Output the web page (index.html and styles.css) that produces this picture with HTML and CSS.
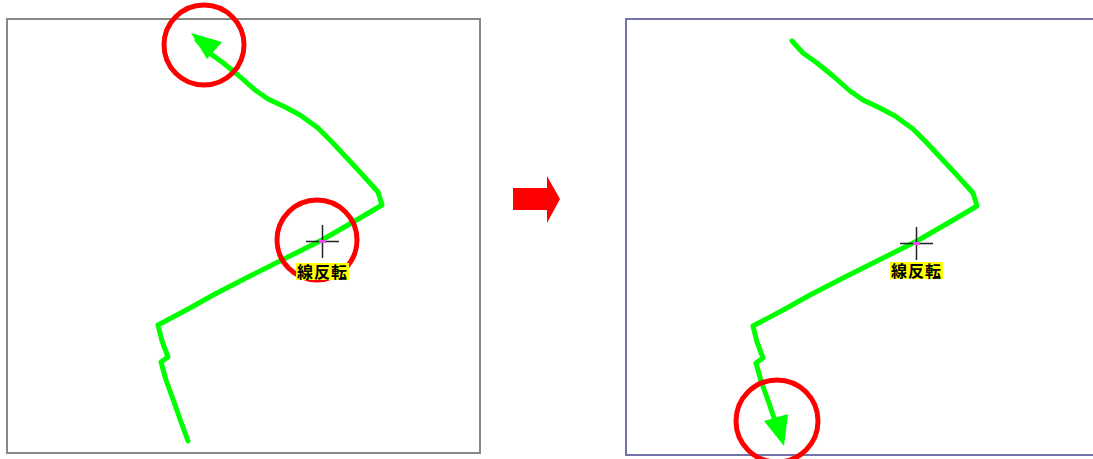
FILE: index.html
```html
<!DOCTYPE html>
<html lang="ja">
  <head>
    <meta charset="UTF-8" />
    <title>線反転</title>
    <link rel="stylesheet" href="styles.css">
  </head>
  <body>
    <div class="page">
      <!-- before -->
      <div class="panel panel-before">
        <svg class="canvas" width="471" height="432">
          <g transform="translate(-8,-20)">
            <path class="stroke" d="M197,40 L208,52 L222,62 L238,75 L255,90 L268,99 L285,107 L300,115 L318,128 L332,142 L345,156 L360,172 L378,192 L382,205 L360,218 L322,240 L290,256 L250,276 L215,294 L190,308 L158,325 L162,341 L168,357 L161,362 L166,380 L174,402 L181,422 L188,441" />
            <polygon class="head" points="191,33 222,42 207,59" />
            <line class="cross" x1="306" y1="241.5" x2="339" y2="241.5" />
            <line class="cross" x1="322.5" y1="225" x2="322.5" y2="258" />
            <rect class="dot" x="319" y="240" width="7" height="3" />
            <circle class="mark" cx="204" cy="45" r="40" />
            <circle class="mark" cx="317" cy="240" r="40" />
          </g>
        </svg>
        <span class="tag tag-before">線反転</span>
      </div>

      <div class="next">
        <svg width="47" height="47">
          <rect x="0" y="12" width="35" height="22" fill="#ff0000" />
          <polygon points="34,0 47,23 34,47" fill="#ff0000" />
        </svg>
      </div>

      <!-- after -->
      <div class="panel panel-after">
        <svg class="canvas" width="520" height="434">
          <g transform="translate(-627,-20)">
            <path class="stroke" d="M792,41 L803,53 L817,63 L833,76 L850,91 L863,100 L880,108 L895,116 L913,129 L927,143 L940,157 L955,173 L973,193 L977,206 L955,219 L917,241 L885,257 L845,277 L810,295 L785,309 L753,326 L757,342 L763,358 L756,363 L761,381 L769,403 L774,418" />
            <polygon class="head" points="764,421 788,414 784,446" />
            <line class="cross" x1="900" y1="243.5" x2="933" y2="243.5" />
            <line class="cross" x1="916.5" y1="227" x2="916.5" y2="260" />
            <rect class="dot" x="913" y="242" width="7" height="3" />
            <circle class="mark" cx="777" cy="421" r="41" />
          </g>
        </svg>
        <span class="tag tag-after">線反転</span>
      </div>
    </div>
  </body>
</html>
```

FILE: styles.css
```css
body {
  margin: 0;
  background: #ffffff;
  overflow: hidden;
  font-family: "Noto Sans CJK JP", sans-serif;
}

.page {
  display: flex;
  align-items: flex-start;
  box-sizing: border-box;
  width: 1093px;
  height: 459px;
  padding: 18px 0 0 6px;
  overflow: hidden;
}

.panel {
  position: relative;
  flex-shrink: 0;
  border: 2px solid #888888;
  background: #ffffff;
}

.panel-before {
  width: 471px;
  height: 432px;
}

.panel-after {
  margin-left: 65px;
  width: 520px;
  height: 434px;
  border-color: #7474aa;
}

.canvas {
  position: absolute;
  left: 0;
  top: 0;
  overflow: visible;
}

.stroke {
  fill: none;
  stroke: #00ff00;
  stroke-width: 5;
  stroke-linejoin: round;
  stroke-linecap: round;
}

.head {
  fill: #00ff00;
}

.cross {
  stroke: #222222;
  stroke-width: 1.5;
}

.dot {
  fill: #ff44ff;
}

.mark {
  fill: none;
  stroke: #ff0000;
  stroke-width: 5;
}

.next {
  margin: 158px 0 0 32px;
  flex-shrink: 0;
}

.next svg {
  display: block;
}

.tag {
  position: absolute;
  padding: 0 1px;
  background: #ffff00;
  color: #000000;
  font-size: 16px;
  font-weight: bold;
  line-height: 17px;
  letter-spacing: 1px;
}

.tag-before {
  left: 288px;
  top: 243px;
}

.tag-after {
  left: 263px;
  top: 242px;
}
```
